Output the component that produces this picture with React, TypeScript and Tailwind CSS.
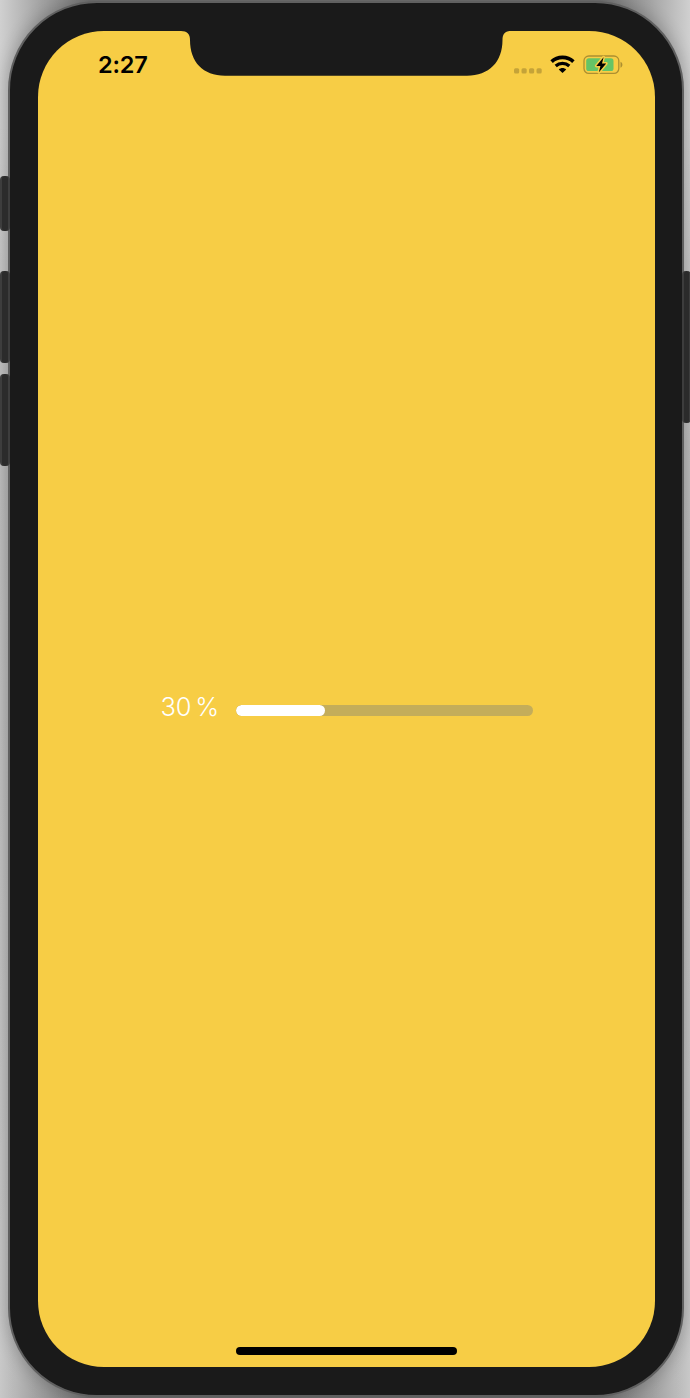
import React from "react";

const progress = 30;

function Notch() {
  return (
    <svg
      className="absolute left-[143px] top-0"
      width="330"
      height="46"
      viewBox="0 0 330 46"
      fill="#1a1a1a"
      aria-hidden="true"
    >
      <path d="M0 0C6 0 9 3 9 9C9 31 22 44.7 44 44.7H286C308 44.7 321.5 31 321.5 9C321.5 3 324 0 330 0Z" />
    </svg>
  );
}

function Signal() {
  return (
    <svg width="28" height="6" viewBox="0 0 28 6" fill="#c5a338" aria-hidden="true">
      <rect x="0" y=".3" width="5.2" height="5.2" rx="1.5" />
      <rect x="7.5" y=".3" width="5.2" height="5.2" rx="1.5" />
      <rect x="15" y=".3" width="5.2" height="5.2" rx="1.5" />
      <rect x="22.5" y=".3" width="5.2" height="5.2" rx="1.5" />
    </svg>
  );
}

function Wifi() {
  return (
    <svg width="25" height="19" viewBox="0 0 25 19" fill="none" aria-hidden="true">
      <path d="M1.6 6.6C7.5 1 17.5 1 23.4 6.6" stroke="#000" strokeWidth="3.6" />
      <path d="M5.7 10.9C9.6 7.4 15.4 7.4 19.3 10.9" stroke="#000" strokeWidth="3.3" />
      <path d="M8.8 14.4C10.8 12.4 14.2 12.4 16.2 14.4L12.5 18.1Z" fill="#000" />
    </svg>
  );
}

function Battery() {
  return (
    <svg width="40" height="20" viewBox="0 0 40 20" fill="none" aria-hidden="true">
      <rect x="1" y="1" width="34.8" height="17.4" rx="4.8" stroke="#ad8f30" strokeWidth="1.3" />
      <path d="M37.5 6.7C40 7.7 40 11.7 37.5 12.7Z" fill="#ad8f30" />
      <rect x="3.2" y="3.3" width="27.3" height="12.8" rx="2.6" fill="#65c466" />
      <path
        d="M20.6 2.2L13.3 10.9H17.4L15.9 17.2L23.2 8.5H19Z"
        fill="#000"
        stroke="#f7cd45"
        strokeWidth="3"
        strokeLinejoin="round"
        paintOrder="stroke"
      />
    </svg>
  );
}

function StatusBar() {
  return (
    <header className="flex h-[68px] items-center justify-between pl-[60px] pr-[32px]">
      <time className="-mt-px text-[23.5px] leading-none font-semibold tracking-[-0.2px] text-black">
        2:27
      </time>
      <div className="flex items-center">
        <span className="mt-[11px] mr-[8px]">
          <Signal />
        </span>
        <span className="-mt-px mr-[8px]">
          <Wifi />
        </span>
        <Battery />
      </div>
    </header>
  );
}

function Progress() {
  return (
    <div className="flex flex-1 items-center pb-[33px] pl-[122.5px]">
      <span className="w-[75.5px] text-[25.5px] leading-none font-[340] tracking-[-0.2px] whitespace-nowrap text-white [word-spacing:-3px]">
        {progress} %
      </span>
      <div className="mt-[7px] h-[11px] w-[297px] overflow-hidden rounded-full bg-[#c4ad5a]">
        <div className="h-full rounded-full bg-white" style={{ width: `${progress}%` }} />
      </div>
    </div>
  );
}

export default function App() {
  return (
    <main className="relative h-[1398px] w-[690px] overflow-hidden bg-[linear-gradient(to_bottom,transparent,transparent_120px,rgba(0,0,0,0.09)_450px,rgba(0,0,0,0.04)_1250px),linear-gradient(to_right,#d0d0d0,#a4a4a4_40px,#757575_90px,#757575_600px,#a4a4a4_650px,#d0d0d0)] pl-[8px] pt-px font-['Inter',sans-serif]">
      <div className="h-[1396px] w-[676px] rounded-[89px] border-2 border-[#606060] bg-[#1a1a1a] pl-[28px] pt-[28px] shadow-[0_0_16px_2px_rgba(0,0,0,0.2)]">
        <div className="relative flex h-[1336px] w-[617px] flex-col overflow-hidden rounded-[66px] bg-[#f7cd45]">
          <Notch />
          <StatusBar />
          <Progress />
          <div className="mb-[12px] ml-[198px] h-[8px] w-[221px] rounded-full bg-black" />
        </div>
      </div>
      <span className="absolute left-0 top-[176px] h-[55px] w-[10px] rounded-[4px] border-x-2 border-[#3d3d3d] bg-[#2b2b2b]" />
      <span className="absolute left-0 top-[271px] h-[92px] w-[10px] rounded-[4px] border-x-2 border-[#3d3d3d] bg-[#2b2b2b]" />
      <span className="absolute left-0 top-[374px] h-[92px] w-[10px] rounded-[4px] border-x-2 border-[#3d3d3d] bg-[#2b2b2b]" />
      <span className="absolute left-[682px] top-[271px] h-[152px] w-[9px] rounded-[4px] border-x-2 border-[#3d3d3d] bg-[#2b2b2b]" />
    </main>
  );
}
